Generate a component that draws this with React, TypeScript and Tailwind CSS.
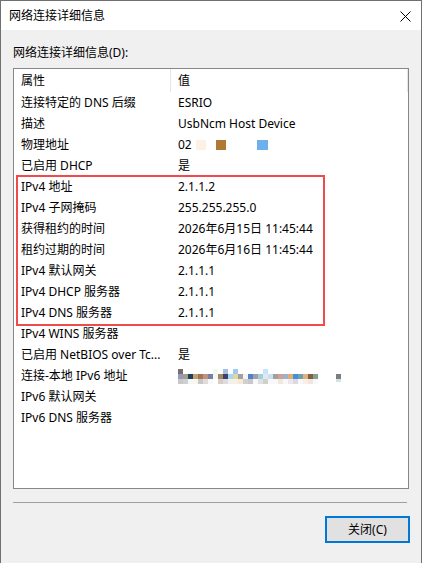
import React from "react";

const rows: [string, string][] = [
  ["连接特定的 DNS 后缀", "ESRIO"],
  ["描述", "UsbNcm Host Device"],
  ["物理地址", "02"],
  ["已启用 DHCP", "是"],
  ["IPv4 地址", "2.1.1.2"],
  ["IPv4 子网掩码", "255.255.255.0"],
  ["获得租约的时间", "2026年6月15日 11:45:44"],
  ["租约过期的时间", "2026年6月16日 11:45:44"],
  ["IPv4 默认网关", "2.1.1.1"],
  ["IPv4 DHCP 服务器", "2.1.1.1"],
  ["IPv4 DNS 服务器", "2.1.1.1"],
  ["IPv4 WINS 服务器", ""],
  ["已启用 NetBIOS over Tc...", "是"],
  ["连接-本地 IPv6 地址", ""],
  ["IPv6 默认网关", ""],
  ["IPv6 DNS 服务器", ""],
];

const blurTop: Record<number, string> = {
  0: "#76706c",
  7: "#f0f8f0",
  9: "#a8c0e0",
  11: "#a0c8f0",
  17: "#c8e4fc",
};
const blurMid: string[] = [
  "#9898c0", "#a0a090", "#204058", "#c0a070", "#a07850", "#c09080", "#7880a0", "#f6f6f6",
  "#a08860", "#404070", "#a8d8f0", "#e0d8a0", "#a0a0a0", "#f4f4f4", "#5080d0", "#a0a0a8",
  "#a0d0d8", "#e0e8f0", "#c8e0f0", "#a0a0a0", "#d0a090", "#a0b0d0", "#e0b070", "#4090e0",
  "#70a0b0", "#e0b080", "#806040", "#80a090",
];
const blurBot: string[] = [
  "#c8c8c8", "#d0d0d0", "#f4f8f8", "#f8f8f0", "#c8c8c8", "#e0dcd8", "#f8f8f8", "#ffffff",
  "#d8d0c8", "#e0dcdc", "#f0f0f0", "#f8f0e0", "#f8e8d8", "#d0d0d0", "#c8c8c8", "#f8f8f8",
  "#e0e0e0", "#d0d0d0", "#f8f8f8", "#f8f8f8", "#f0e8e0", "#f8f8f8", "#e8e8f0", "#e0d8e0",
  "#f8f8f8", "#f8f0e8", "#f0e8e0", "#f8f8f8",
];

function BlurIPv6() {
  return (
    <svg width="170" height="15" viewBox="0 0 170 15" className="block">
      {Object.entries(blurTop).map(([i, c]) => (
        <rect key={"t" + i} x={Number(i) * 5} y={0} width={5} height={5} fill={c} />
      ))}
      {blurMid.map((c, i) => (
        <rect key={"m" + i} x={i * 5} y={5} width={5} height={5} fill={c} />
      ))}
      <rect x={158} y={5} width={5} height={5} fill="#788080" />
      {blurBot.map((c, i) => (
        <rect key={"b" + i} x={i * 5} y={10} width={5} height={5} fill={c} />
      ))}
      <rect x={158} y={10} width={5} height={3} fill="#d8e0e8" />
    </svg>
  );
}

function MacValue() {
  return (
    <div className="flex items-center">
      <span>02</span>
      <span className="ml-[4px] inline-block w-[10px] h-[10px] bg-[#fdf0e4]" />
      <span className="ml-[10px] inline-block w-[10px] h-[10px] bg-[#b07a35]" />
      <span className="ml-[31px] inline-block w-[11px] h-[10px] bg-[#6cb0ec]" />
    </div>
  );
}

export default function App() {
  return (
    <div
      className="relative w-[422px] h-[563px] flex flex-col bg-[#f0f0f0] border-x border-t border-[#707070] text-black text-[12px] leading-[16px]"
      style={{ fontFamily: '"Noto Sans", "Noto Sans CJK SC", sans-serif' }}
    >
      {/* title bar */}
      <div className="h-[29px] bg-white flex items-center justify-between pl-[8px] pr-[10px] shrink-0">
        <span className="mt-[1px]">网络连接详细信息</span>
        <svg width="11" height="11" viewBox="0 0 11 11" className="mt-[1px]">
          <path d="M0.5 0.5 L10.5 10.5 M10.5 0.5 L0.5 10.5" stroke="#000" strokeWidth="1" fill="none" />
        </svg>
      </div>

      {/* body */}
      <div className="flex flex-col px-[12px] pt-[15px]">
        <div>网络连接详细信息(D):</div>

        <div className="relative mt-[7px] w-[396px] h-[421px] bg-white border border-[#828790]">
          {/* header */}
          <div className="relative grid grid-cols-[156px_1px_1fr] h-[23px] items-center">
            <div className="pl-[7px] pt-[1px]">属性</div>
            <div className="h-[23px] bg-[#e5e5e5]" />
            <div className="pl-[7px] pt-[1px]">值</div>
            <div className="absolute right-[0px] top-0 w-[1px] h-[23px] bg-[#e5e5e5]" />
          </div>

          {/* rows */}
          <div className="flex flex-col">
            {rows.map(([k, v], i) => (
              <div key={i} className="grid grid-cols-[157px_1fr] h-[21px] items-center pt-[1px]">
                <div className="pl-[7px] whitespace-nowrap overflow-hidden">{k}</div>
                <div className="pl-[7px] whitespace-nowrap">
                  {i === 2 ? <MacValue /> : i === 13 ? <BlurIPv6 /> : v}
                </div>
              </div>
            ))}
          </div>
        </div>

        <div className="mt-[13px] w-[394px] h-[1px] bg-[#a0a0a0]" />

        <div className="mt-[13px] flex justify-end mr-[-1px]">
          <button className="w-[85px] h-[27px] bg-[#e1e1e1] border-2 border-[#0078d7] flex items-center justify-center">
            关闭(C)
          </button>
        </div>
      </div>

      {/* red highlight annotation */}
      <div className="pointer-events-none absolute left-[15px] top-[174px] w-[309px] h-[151px] border-2 border-[#f04b4b]" />
    </div>
  );
}
